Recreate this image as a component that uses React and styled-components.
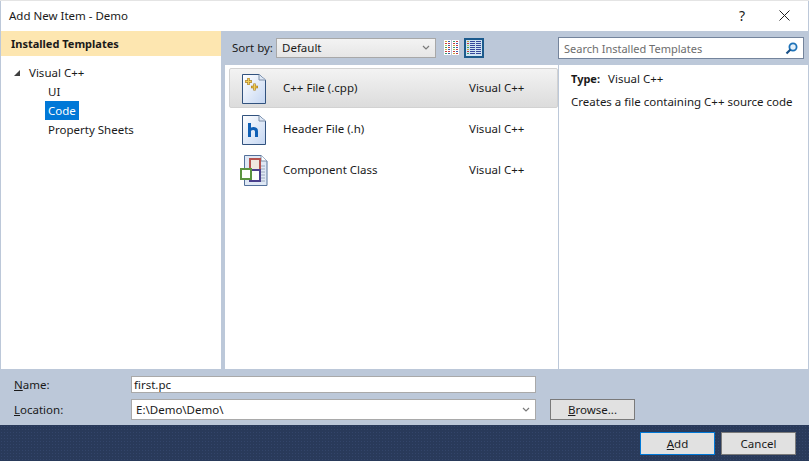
import React from 'react'
import styled, { createGlobalStyle } from 'styled-components'

const Global = createGlobalStyle`
  html, body {
    margin: 0;
    padding: 0;
    background: #ffffff;
  }
`

const Dialog = styled.div`
  width: 809px;
  height: 461px;
  box-sizing: border-box;
  display: flex;
  flex-direction: column;
  overflow: hidden;
  padding: 0 1px 0 1px;
  border-top: 1px solid #e4e4e4;
  background: #bcc8d9;
  color: #1a1a1a;
  font-family: "Noto Sans", "Liberation Sans", sans-serif;
  font-size: 11.5px;
`

const TitleBar = styled.div`
  height: 30px;
  flex: none;
  box-sizing: border-box;
  display: flex;
  align-items: center;
  background: #ffffff;
  padding: 0 0 2px 8px;
`

const Title = styled.div`
  flex: 1;
`

const HelpMark = styled.div`
  width: 18px;
  margin-right: 28px;
  text-align: center;
  font-size: 14px;
`

const CloseMark = styled.svg`
  width: 11px;
  height: 11px;
  margin-right: 18px;
`

const Main = styled.div`
  height: 338px;
  flex: none;
  display: flex;
`

const LeftPanel = styled.div`
  width: 220px;
  flex: none;
  background: #ffffff;
`

const PanelHeader = styled.div`
  height: 25px;
  display: flex;
  align-items: center;
  padding-left: 10px;
  background: #fde6b0;
  font-size: 11px;
  font-weight: 700;
`

const Tree = styled.div`
  padding-top: 7px;
`

const TreeRow = styled.div`
  height: 19px;
  display: flex;
  align-items: center;
  padding-left: ${p => p.$indent}px;
`

const TreeArrow = styled.svg`
  width: 6px;
  height: 6px;
  margin-right: 6px;
`

const TreeLabel = styled.span`
  padding: 0 3px;
  line-height: 19px;
  ${p => p.$selected && 'background: #0078d7; color: #ffffff;'}
`

const Middle = styled.div`
  width: 333px;
  flex: none;
  margin-left: 4px;
  display: flex;
  flex-direction: column;
`

const Toolbar = styled.div`
  height: 34px;
  flex: none;
  display: flex;
  align-items: center;
  padding: 0 0 1px 7px;
  box-sizing: border-box;
`

const SortLabel = styled.span`
  width: 44px;
  flex: none;
`

const Combo = styled.div`
  width: 160px;
  height: 20px;
  box-sizing: border-box;
  flex: none;
  display: flex;
  align-items: center;
  justify-content: space-between;
  padding: 0 5px;
  border: 1px solid #a8a8a8;
  background: linear-gradient(#f3f3f3, #e6e6e6);
`

const Chevron = styled.svg`
  width: 8px;
  height: 5px;
  flex: none;
`

const ViewButton = styled.div`
  width: ${p => p.$width}px;
  height: 20px;
  box-sizing: border-box;
  flex: none;
  display: flex;
  align-items: center;
  justify-content: center;
  margin-left: ${p => p.$gap}px;
  ${p => p.$active && 'border: 2px solid #1c5a8c; background: #cfe3f2;'}
`

const ItemList = styled.div`
  flex: 1;
  background: #ffffff;
  padding: 3px 0 0 4px;
`

const ItemRow = styled.div`
  height: 40px;
  margin-bottom: 1px;
  box-sizing: border-box;
  display: flex;
  align-items: center;
  padding-left: 12px;
  border: 1px solid transparent;
  border-radius: 2px;
  ${p => p.$selected && `
    border-color: #d2d2d2;
    background: linear-gradient(#f3f3f3, #dcdcdc);
  `}
`

const ItemIcon = styled.svg`
  width: 24px;
  height: 31px;
  flex: none;
  overflow: visible;
`

const ItemText = styled.span`
  margin-bottom: 2px;
`

const ItemName = styled(ItemText)`
  width: 186px;
  flex: none;
  margin-left: 17px;
`

const RightColumn = styled.div`
  flex: 1;
  margin-left: 1px;
  display: flex;
  flex-direction: column;
`

const SearchArea = styled.div`
  height: 34px;
  flex: none;
  padding-top: 6px;
  box-sizing: border-box;
`

const SearchBox = styled.div`
  width: 246px;
  height: 22px;
  margin-left: -1px;
  box-sizing: border-box;
  display: flex;
  align-items: center;
  justify-content: space-between;
  padding: 0 5px;
  border: 1px solid #74849c;
  background: #ffffff;
  color: #6d6d6d;
  font-size: 11px;
`

const Details = styled.div`
  flex: 1;
  background: #ffffff;
  padding: 2px 0 0 12px;
`

const DetailLine = styled.div`
  height: 23px;
  display: flex;
  align-items: center;
`

const DetailKey = styled.b`
  margin-right: 8px;
  font-size: 11px;
`

const FormArea = styled.div`
  height: 56px;
  flex: none;
  display: grid;
  grid-template-columns: 130px 405px auto;
  grid-template-rows: 17px 21px;
  row-gap: 6px;
  align-items: center;
  padding-top: 7px;
  box-sizing: border-box;
`

const FormLabel = styled.label`
  padding-left: 13px;
`

const TextField = styled.div`
  height: ${p => p.$height}px;
  box-sizing: border-box;
  display: flex;
  align-items: center;
  justify-content: space-between;
  padding: 0 5px 0 ${p => p.$pad}px;
  border: 1px solid #a9a9a9;
  background: #ffffff;
`

const Button = styled.div`
  width: ${p => p.$width}px;
  height: ${p => p.$height}px;
  box-sizing: border-box;
  display: flex;
  align-items: center;
  justify-content: center;
  border: 1px solid ${p => (p.$focused ? '#0078d7' : '#7a7a7a')};
  background-color: #e1e1e1;
`

const BrowseButton = styled(Button)`
  margin-left: 14px;
`

const Footer = styled.div`
  flex: 1;
  margin: 0 -1px;
  display: flex;
  align-items: center;
  justify-content: flex-end;
  gap: 6px;
  padding-right: 13px;
  background-color: #293a5a;
  background-image: radial-gradient(#33456a 0.8px, transparent 0.8px);
  background-size: 3px 3px;
`

const ViewIcon = ({ columns }) => {
  const colors = ['#c9a23c', '#c83c3c', '#a8c850', '#3c9c6c', '#c8a83c', '#c83c3c', '#3c9c6c']
  const rows = [0, 1, 2, 3, 4, 5, 6]
  if (columns === 2) {
    return (
      <svg width="15" height="15" viewBox="0 0 15 15">
        <rect x="0" y="0" width="7" height="15" fill="#ffffff" />
        <rect x="8" y="0" width="7" height="15" fill="#ffffff" />
        {rows.map(i => (
          <g key={i}>
            <rect x="1" y={1 + i * 2} width="2" height="1" fill={colors[i]} />
            <rect x="4" y={1 + i * 2} width="2" height="1" fill={i % 2 ? '#c83c3c' : '#3c5ca8'} />
            <rect x="9" y={1 + i * 2} width="2" height="1" fill={colors[6 - i]} />
            <rect x="12" y={1 + i * 2} width="2" height="1" fill={i % 2 ? '#3c5ca8' : '#c83c3c'} />
          </g>
        ))}
      </svg>
    )
  }
  return (
    <svg width="14" height="13" viewBox="0 0 14 13">
      {rows.map(i => (
        <g key={i}>
          <rect x="0" y={i * 2} width="2" height="1" fill={colors[i]} />
          <rect x="3" y={i * 2} width="5" height="1" fill="#35479a" />
          <rect x="9" y={i * 2} width="5" height="1" fill="#35479a" />
        </g>
      ))}
    </svg>
  )
}

const PageShape = () => (
  <>
    <defs>
      <linearGradient id="sheet" x1="0" y1="0" x2="1" y2="1">
        <stop offset="0" stopColor="#ffffff" />
        <stop offset="1" stopColor="#c4d6f2" />
      </linearGradient>
    </defs>
    <path d="M0.5 1.5H17L23.5 7V30.5H0.5Z" fill="url(#sheet)" stroke="#31527e" />
    <path d="M17 1.5V7H23.5" fill="#dfe8f5" stroke="#7d8fa8" />
  </>
)

const CppIcon = () => (
  <ItemIcon viewBox="0 0 24 31">
    <PageShape />
    <path d="M6.5 5V12M3 8.5H10M12.5 10.5V17.5M9 14H16" stroke="#a87a18" strokeWidth="2.4" fill="none" />
    <path d="M6.5 5.5V11.5M3.5 8.5H9.5M12.5 11V17M9.5 14H15.5" stroke="#f3cf58" strokeWidth="1.2" fill="none" />
  </ItemIcon>
)

const HeaderIcon = () => (
  <ItemIcon viewBox="0 0 24 31">
    <PageShape />
    <path d="M7.5 9V23M7.5 16.5C9 14 14.5 13.5 14.5 17.5V23" stroke="#0f5fb5" strokeWidth="3" fill="none" />
  </ItemIcon>
)

const ClassIcon = () => (
  <ItemIcon viewBox="0 0 24 31">
    <path d="M2.5 0.5H19L25 6V30.5H2.5Z" fill="#dfe8f5" stroke="#53709a" />
    <path d="M19 0.5V6H25" fill="#ffffff" stroke="#7d8fa8" />
    <path d="M19 11H23M19 14H23M19 17H23M19 20H23M19 23H23M19 26H23" stroke="#9aa8bd" />
    <rect x="8" y="4" width="10" height="11" fill="#efe7e0" stroke="#b5524e" strokeWidth="2" />
    <rect x="8" y="15" width="10" height="11" fill="#ffffff" stroke="#4a3f8c" strokeWidth="2" />
    <rect x="-1" y="14" width="10" height="10" fill="#ffffff" stroke="#5c9440" strokeWidth="2" />
  </ItemIcon>
)

const DownChevron = () => (
  <Chevron viewBox="0 0 8 5">
    <path d="M1 1L4 4L7 1" stroke="#7a7a7a" strokeWidth="1.2" fill="none" />
  </Chevron>
)

const items = [
  { name: 'C++ File (.cpp)', icon: <CppIcon />, selected: true },
  { name: 'Header File (.h)', icon: <HeaderIcon /> },
  { name: 'Component Class', icon: <ClassIcon /> },
]

const App = () => (
  <Dialog>
    <Global />
    <TitleBar>
      <Title>Add New Item - Demo</Title>
      <HelpMark>?</HelpMark>
      <CloseMark viewBox="0 0 11 11">
        <path d="M0.5 0.5L10.5 10.5M10.5 0.5L0.5 10.5" stroke="#222222" fill="none" />
      </CloseMark>
    </TitleBar>
    <Main>
      <LeftPanel>
        <PanelHeader>Installed Templates</PanelHeader>
        <Tree>
          <TreeRow $indent={13}>
            <TreeArrow viewBox="0 0 6 6">
              <path d="M6 0V6H0Z" fill="#404040" />
            </TreeArrow>
            <TreeLabel>Visual C++</TreeLabel>
          </TreeRow>
          <TreeRow $indent={44}><TreeLabel>UI</TreeLabel></TreeRow>
          <TreeRow $indent={44}><TreeLabel $selected>Code</TreeLabel></TreeRow>
          <TreeRow $indent={44}><TreeLabel>Property Sheets</TreeLabel></TreeRow>
        </Tree>
      </LeftPanel>
      <Middle>
        <Toolbar>
          <SortLabel>Sort by:</SortLabel>
          <Combo>
            Default
            <DownChevron />
          </Combo>
          <ViewButton $gap={8} $width={15}><ViewIcon columns={2} /></ViewButton>
          <ViewButton $gap={5} $width={20} $active><ViewIcon columns={1} /></ViewButton>
        </Toolbar>
        <ItemList>
          {items.map(item => (
            <ItemRow key={item.name} $selected={item.selected}>
              {item.icon}
              <ItemName>{item.name}</ItemName>
              <ItemText>Visual C++</ItemText>
            </ItemRow>
          ))}
        </ItemList>
      </Middle>
      <RightColumn>
        <SearchArea>
          <SearchBox>
            Search Installed Templates
            <svg width="13" height="13" viewBox="0 0 13 13">
              <circle cx="8" cy="5" r="3.6" fill="#e4f0fa" stroke="#1e72b8" strokeWidth="1.8" />
              <path d="M5.5 7.5L1.5 11.5" stroke="#174f86" strokeWidth="2.2" />
            </svg>
          </SearchBox>
        </SearchArea>
        <Details>
          <DetailLine><DetailKey>Type:</DetailKey>Visual C++</DetailLine>
          <DetailLine>Creates a file containing C++ source code</DetailLine>
        </Details>
      </RightColumn>
    </Main>
    <FormArea>
      <FormLabel><u>N</u>ame:</FormLabel>
      <TextField $height={17} $pad={2}>first.pc</TextField>
      <span />
      <FormLabel><u>L</u>ocation:</FormLabel>
      <TextField $height={21} $pad={4}>
        E:\Demo\Demo\
        <DownChevron />
      </TextField>
      <BrowseButton $width={85} $height={21}><span><u>B</u>rowse...</span></BrowseButton>
    </FormArea>
    <Footer>
      <Button $width={75} $height={23} $focused><span><u>A</u>dd</span></Button>
      <Button $width={75} $height={23}>Cancel</Button>
    </Footer>
  </Dialog>
)

export default App
